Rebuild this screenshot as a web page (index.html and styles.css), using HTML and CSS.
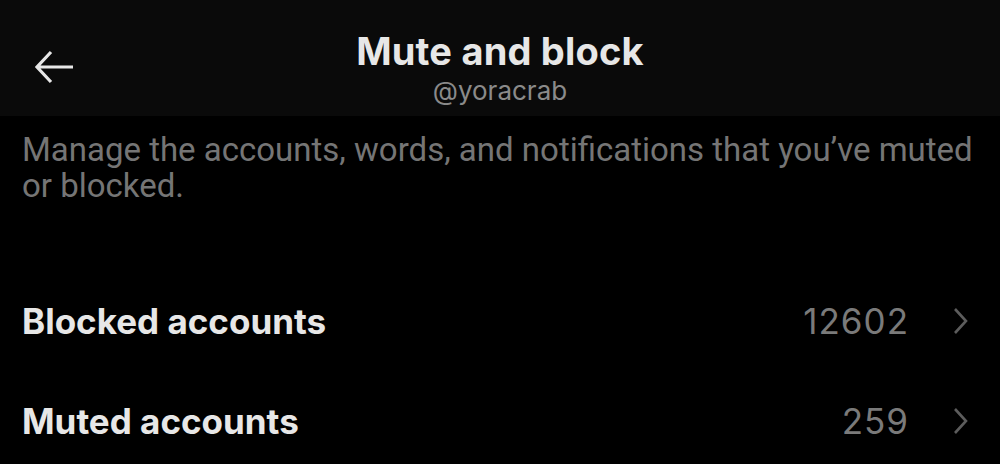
FILE: index.html
```html
<!DOCTYPE html>
<html lang="en">
<head>
    <meta charset="UTF-8">
    <meta name="viewport" content="width=device-width, initial-scale=1.0">
    <title>Mute and block</title>
    <link rel="stylesheet" href="styles.css">
</head>
<body>
<header class="topbar">
    <button class="back-btn" aria-label="Back">
        <svg viewBox="0 0 44 36" width="44" height="36">
            <path d="M40 18H4M18 3L4 18l14 15" fill="none" stroke="#e7e7e7" stroke-width="3.2"/>
        </svg>
    </button>
    <div class="title-block">
        <h1>Mute and block</h1>
        <div class="handle">@yoracrab</div>
    </div>
    <div class="spacer"></div>
</header>

<p class="intro">Manage the accounts, words, and notifications that you’ve muted or blocked.</p>

<ul class="settings">
    <li class="row">
        <span class="label">Blocked accounts</span>
        <span class="count">12602</span>
        <span class="chevron">
            <svg viewBox="0 0 20 28" width="20" height="28"><path d="M5 2l11 12L5 26" fill="none" stroke="#5c5c5c" stroke-width="2.6"/></svg>
        </span>
    </li>
    <li class="row">
        <span class="label">Muted accounts</span>
        <span class="count">259</span>
        <span class="chevron">
            <svg viewBox="0 0 20 28" width="20" height="28"><path d="M5 2l11 12L5 26" fill="none" stroke="#5c5c5c" stroke-width="2.6"/></svg>
        </span>
    </li>
</ul>
</body>
</html>
```

FILE: styles.css
```css
body {
    margin: 0;
    background-color: #000;
    color: #e7e7e7;
    font-family: Inter, Roboto, "Liberation Sans", sans-serif;
    height: 464px;
    overflow: hidden;
}
.topbar {
    display: grid;
    grid-template-columns: 110px 1fr 110px;
    align-items: start;
    height: 116px;
    background-color: #0a0a0a;
}
.back-btn {
    background: none;
    border: none;
    padding: 0;
    margin: 49px 0 0 33px;
    width: 44px;
    height: 36px;
    cursor: pointer;
}
.back-btn svg {
    display: block;
}
.title-block {
    text-align: center;
}
h1 {
    margin: 29px 0 0;
    font-size: 38px;
    line-height: 44px;
    font-weight: 700;
    letter-spacing: 0.2px;
}
.handle {
    margin-top: 2px;
    font-size: 26px;
    line-height: 32px;
    color: #8a8a8a;
}
.intro {
    margin: 0;
    padding: 16px 22px 0;
    font-family: Roboto, "Liberation Sans", sans-serif;
    font-size: 33px;
    line-height: 36px;
    color: #757575;
}
.settings {
    list-style: none;
    margin: 0;
    padding: 0;
    margin-top: 67px;
}
.row {
    display: flex;
    align-items: center;
    height: 100px;
    padding: 0 30px 0 22px;
}
.label {
    flex: 1;
    font-size: 35px;
    font-weight: 700;
    color: #e7e7e7;
}
.count {
    font-size: 35px;
    letter-spacing: 1px;
    color: #7a7a7a;
    margin-right: 41px;
}
.chevron svg {
    display: block;
}
```
